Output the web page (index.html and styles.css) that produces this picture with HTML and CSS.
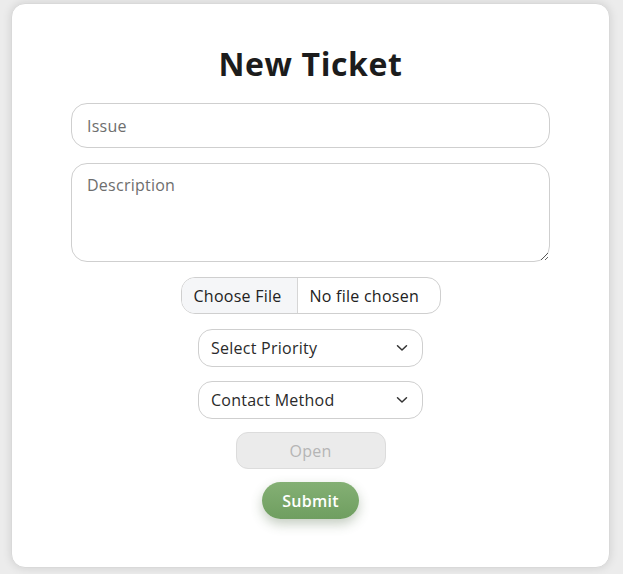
FILE: index.html
```
<!DOCTYPE html>
<html lang="en">
<head>
<meta charset="utf-8">
<title>New Ticket</title>
<link rel="stylesheet" href="styles.css">
</head>
<body>
<main class="card">
  <h1 class="title">New Ticket</h1>
  <form class="form">
    <input class="field field-issue" type="text" placeholder="Issue">
    <textarea class="field field-desc" placeholder="Description"></textarea>
    <label class="file">
      <span class="file-btn">Choose File</span>
      <span class="file-name">No file chosen</span>
    </label>
    <div class="select">
      <span class="select-text">Select Priority</span>
      <svg class="chevron" width="12" height="8" viewBox="0 0 12 8"><path d="M1.5 1.8 L6 6 L10.5 1.8" fill="none" stroke="#333" stroke-width="1.5" stroke-linecap="round" stroke-linejoin="round"/></svg>
    </div>
    <div class="select">
      <span class="select-text">Contact Method</span>
      <svg class="chevron" width="12" height="8" viewBox="0 0 12 8"><path d="M1.5 1.8 L6 6 L10.5 1.8" fill="none" stroke="#333" stroke-width="1.5" stroke-linecap="round" stroke-linejoin="round"/></svg>
    </div>
    <button class="btn-open" type="button" disabled>Open</button>
    <button class="btn-submit" type="button">Submit</button>
  </form>
</main>
</body>
</html>
```
FILE: styles.css
```
* { box-sizing: border-box; }
html, body { margin: 0; padding: 0; }
body {
  background: #ececec;
  font-family: "Open Sans", "Liberation Sans", sans-serif;
  letter-spacing: 0.25px;
  padding: 3px 13px 6px 11px;
}
.card {
  width: 599px;
  height: 565px;
  background: #ffffff;
  border: 1px solid #d9d9d9;
  border-radius: 14px;
  box-shadow: 0 0 10px rgba(0,0,0,0.12);
  padding: 40px 0 0;
}
.title {
  margin: 0;
  text-align: center;
  font-size: 32px;
  line-height: 40px;
  font-weight: 700;
  color: #1c1c1c;
  letter-spacing: 0.6px;
}
.form {
  display: flex;
  flex-direction: column;
  align-items: center;
  margin-top: 19px;
}
.field {
  display: block;
  width: 479px;
  border: 1px solid #cfcfcf;
  border-radius: 16px;
  background: #fff;
  font-family: inherit;
  letter-spacing: inherit;
  font-size: 16px;
  color: #333;
  padding: 0 15px;
  outline: none;
}
.field::placeholder { color: #6e6e6e; }
.field-issue { height: 45px; }
.field-desc {
  height: 99px;
  margin-top: 15px;
  padding-top: 10px;
  resize: vertical;
}
.file {
  display: flex;
  margin-top: 15px;
  height: 37px;
  width: 260px;
  border: 1px solid #cfcfcf;
  border-radius: 14px;
  overflow: hidden;
  font-size: 16px;
  color: #222;
}
.file-btn {
  display: flex;
  align-items: center;
  padding: 0 12px 0 12px;
  background: #f5f6f8;
  border-right: 1px solid #d6d6d6;
  width: 116px;
}
.file-name {
  display: flex;
  align-items: center;
  padding-left: 12px;
}
.select {
  display: flex;
  align-items: center;
  justify-content: space-between;
  width: 225px;
  height: 38px;
  margin-top: 15px;
  padding: 0 14px 0 12px;
  border: 1px solid #cfcfcf;
  border-radius: 14px;
  font-size: 16px;
  color: #2a2a2a;
}
.select + .select { margin-top: 14px; }
.btn-open {
  margin-top: 13px;
  width: 150px;
  height: 37px;
  border: 1px solid #dcdcdc;
  border-radius: 12px;
  background: #ebebeb;
  color: #b5b5b5;
  font-family: inherit;
  letter-spacing: inherit;
  font-size: 16px;
}
.btn-submit {
  margin-top: 13px;
  width: 97px;
  height: 37px;
  border: none;
  border-radius: 19px;
  background: linear-gradient(180deg, #84b074 0%, #6f9e60 100%);
  color: #ffffff;
  font-family: inherit;
  letter-spacing: inherit;
  font-size: 16px;
  font-weight: 600;
  box-shadow: 0 5px 12px rgba(60, 90, 50, 0.3);
}
```
